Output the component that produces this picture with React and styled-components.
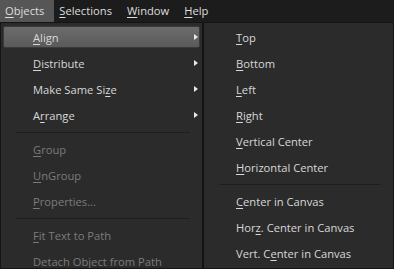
import React from "react"
import styled, { createGlobalStyle } from "styled-components"

const GlobalStyle = createGlobalStyle`
  html, body {
    margin: 0;
    padding: 0;
    background: #2b2b2b;
    overflow: hidden;
  }
  body {
    font-family: "Open Sans", "Noto Sans", sans-serif;
    font-size: 11.2px;
  }
  * {
    box-sizing: border-box;
  }
`

const Screen = styled.div`
  width: 394px;
  height: 269px;
  display: flex;
  flex-direction: column;
  background: #2b2b2b;
  overflow: hidden;
`

const MenuBar = styled.div`
  display: flex;
  flex-shrink: 0;
  height: 23px;
  background: #1c1c1c;
  border-bottom: 1px solid #141414;
`

const BarItem = styled.div`
  display: flex;
  align-items: center;
  padding: 0 10px 1px 5px;
  color: #dedede;
  background: ${p => (p.$open ? "#565656" : "transparent")};
`

const Menus = styled.div`
  flex: 1;
  display: flex;
  min-height: 0;
`

const Panel = styled.div`
  width: ${p => p.$width}px;
  flex-shrink: 0;
  background: #2b2b2b;
  border: 1px solid #151515;
  border-top: none;
  padding: 1px 2px;
  display: flex;
  flex-direction: column;
  overflow: hidden;
  ${p => p.$sub && "border-left: 1px solid #121212; height: 246px;"}
`

const Item = styled.div`
  position: relative;
  flex-shrink: 0;
  height: 22px;
  margin: 2px 0;
  padding-left: 29px;
  display: flex;
  align-items: center;
  color: ${p => (p.$disabled ? "#7b7b7b" : "#d8d8d8")};
  background: ${p => (p.$active ? "linear-gradient(#6c6c6c, #5a5a5a)" : "transparent")};
  border: 1px solid ${p => (p.$active ? "#3a3a3a" : "transparent")};
  border-radius: 2px;
  white-space: nowrap;
`

const Text = styled.span`
  white-space: pre;
`

const Key = styled.span`
  text-decoration: underline;
  text-underline-offset: 2px;
`

const Arrow = styled.span`
  position: absolute;
  right: 1px;
  top: 6.5px;
  width: 0;
  height: 0;
  border-top: 3.5px solid transparent;
  border-bottom: 3.5px solid transparent;
  border-left: 4px solid #e8e8e8;
`

const Separator = styled.div`
  flex-shrink: 0;
  height: 1px;
  margin: 4px 10px 3px 13px;
  background: #1f1f1f;
`

const label = (text, key) => (
  <Text>
    {text.slice(0, key)}
    <Key>{text[key]}</Key>
    {text.slice(key + 1)}
  </Text>
)

const mainItems = [
  { t: "Align", k: 0, sub: true, active: true },
  { t: "Distribute", k: 0, sub: true },
  { t: "Make Same Size", k: 12, sub: true },
  { t: "Arrange", k: 1, sub: true },
  "sep",
  { t: "Group", k: 0, disabled: true },
  { t: "UnGroup", k: 0, disabled: true },
  { t: "Properties...", k: 0, disabled: true },
  "sep",
  { t: "Fit Text to Path", k: 0, disabled: true },
  { t: "Detach Object from Path", k: 5, disabled: true },
]

const alignItems = [
  { t: "Top", k: 0 },
  { t: "Bottom", k: 0 },
  { t: "Left", k: 0 },
  { t: "Right", k: 0 },
  { t: "Vertical Center", k: 0 },
  { t: "Horizontal Center", k: 0 },
  "sep",
  { t: "Center in Canvas", k: 0 },
  { t: "Horz. Center in Canvas", k: 3 },
  { t: "Vert. Center in Canvas", k: 7 },
]

const renderItems = items =>
  items.map((it, i) =>
    it === "sep" ? (
      <Separator key={i} />
    ) : (
      <Item key={i} $active={it.active} $disabled={it.disabled}>
        {label(it.t, it.k)}
        {it.sub && <Arrow />}
      </Item>
    )
  )

const App = () => {
  return (
    <Screen>
      <GlobalStyle />
      <MenuBar>
        <BarItem $open>{label("Objects", 0)}</BarItem>
        <BarItem>{label("Selections", 0)}</BarItem>
        <BarItem>{label("Window", 0)}</BarItem>
        <BarItem>{label("Help", 0)}</BarItem>
      </MenuBar>
      <Menus>
        <Panel $width={203}>{renderItems(mainItems)}</Panel>
        <Panel $width={191} $sub>{renderItems(alignItems)}</Panel>
      </Menus>
    </Screen>
  )
}

export default App
